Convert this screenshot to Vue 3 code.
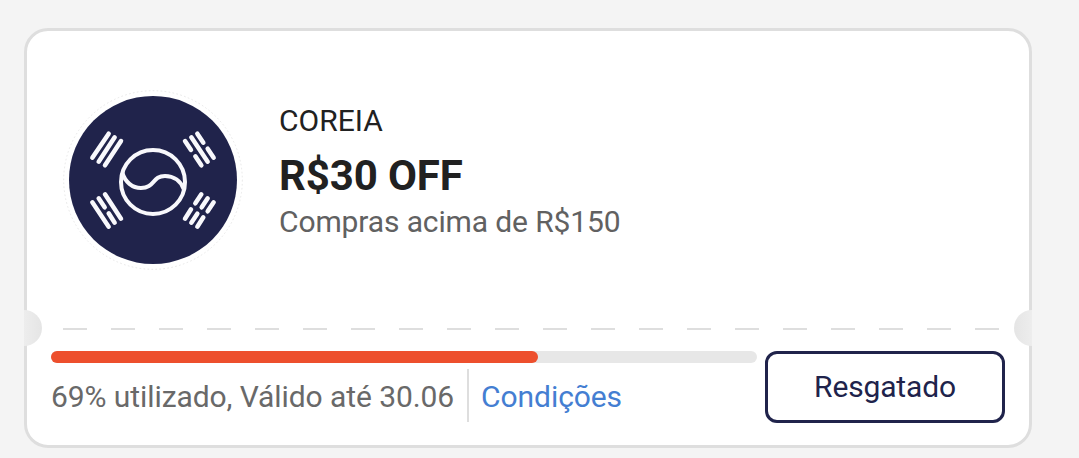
<script setup>
import { ref } from "vue";

const coupon = ref({
  store: "COREIA",
  discount: "R$30 OFF",
  minimum: "Compras acima de R$150",
  used: 69,
  validUntil: "30.06",
});
</script>

<template>
  <main class="coupon">
    <section class="coupon-top">
      <svg class="logo" viewBox="39 30 540 540">
        <circle class="logo-ring" cx="309" cy="300" r="268" />
        <circle class="logo-bg" cx="309" cy="300" r="252" />
        <g class="logo-lines">
          <circle cx="309" cy="306" r="96" />
          <path
            d="M217 278C225 306 247 324 273 324C315 324 306 288 345 288C371 288 392 303 401 327"
          />
        </g>
        <g class="logo-bars">
          <path d="M176 161L127 233M194 172L146 245M213 183L165 256" />
          <path
            d="M442 161L460 188M473 206L491 233M424 172L473 245M405 183L423 210M436 229L454 256"
          />
          <path
            d="M127 367L176 440M146 355L164 382M176 400L194 428M165 343L213 416"
          />
          <path
            d="M454 343L436 370M423 388L405 416M473 355L455 382M442 401L424 428M491 367L473 394M460 412L442 440"
          />
        </g>
      </svg>
      <div class="info">
        <p class="store">{{ coupon.store }}</p>
        <h1 class="discount">{{ coupon.discount }}</h1>
        <p class="minimum">{{ coupon.minimum }}</p>
      </div>
    </section>

    <div class="divider">
      <span class="notch"></span>
      <span class="dashes"></span>
      <span class="notch notch-right"></span>
    </div>

    <section class="coupon-bottom">
      <div class="usage">
        <div class="progress">
          <div class="progress-fill" :style="{ width: coupon.used + '%' }"></div>
        </div>
        <div class="details">
          <span class="validity"
            >{{ coupon.used }}% utilizado, Válido até
            {{ coupon.validUntil }}</span
          >
          <a class="conditions">Condições</a>
        </div>
      </div>
      <button class="btn">Resgatado</button>
    </section>
  </main>
</template>

<style>
body {
  background-color: #f4f4f4;
}

#app {
  display: flow-root;
}
</style>

<style scoped>
.coupon {
  box-sizing: border-box;
  width: 1008px;
  height: 420px;
  margin: 28px 0 0 24px;
  border: 3px solid #dedede;
  border-radius: 24px;
  background-color: #fff;
  font-family: Roboto, sans-serif;
  font-size: 30px;
}

.coupon-top {
  display: flex;
  align-items: flex-start;
  box-sizing: border-box;
  height: 279px;
  padding: 59px 36px 0;
}

.logo {
  width: 180px;
  height: 180px;
}

.logo-ring {
  fill: #fff;
  stroke: #dcdcdc;
  stroke-width: 2;
  stroke-dasharray: 5 7;
}

.logo-bg {
  fill: #20234b;
}

.logo-lines,
.logo-bars {
  fill: none;
  stroke: #f8f8fc;
  stroke-width: 12;
}

.logo-bars {
  stroke-width: 13.5;
  stroke-linecap: round;
}

.info {
  margin: 13px 0 0 36px;
}

.store,
.discount,
.minimum {
  margin: 0;
  white-space: nowrap;
}

.store {
  line-height: 36px;
  color: #212121;
}

.discount {
  margin-top: 11px;
  font-size: 42px;
  font-weight: 700;
  line-height: 52px;
  letter-spacing: -0.12px;
  color: #212121;
}

.minimum {
  margin-top: 2px;
  line-height: 36px;
  letter-spacing: -0.12px;
  color: #616161;
}

.divider {
  display: flex;
  align-items: center;
  justify-content: space-between;
  height: 36px;
  margin: 0 -3px;
}

.notch {
  width: 18px;
  height: 36px;
  border-radius: 0 18px 18px 0;
  background: linear-gradient(to right, #ededed, #e5e5e5);
}

.notch-right {
  border-radius: 18px 0 0 18px;
  background: linear-gradient(to left, #ededed, #e5e5e5);
}

.dashes {
  width: 936px;
  height: 2px;
  margin-left: 6px;
  margin-top: 1px;
  background: repeating-linear-gradient(
    to right,
    #dedede 0 24px,
    transparent 24px 48px
  );
}

.coupon-bottom {
  display: flex;
  gap: 8px;
  padding: 5px 24px 0;
}

.usage {
  flex: 1;
}

.progress {
  height: 12px;
  border-radius: 6px;
  background-color: #e7e7e7;
}

.progress-fill {
  height: 100%;
  border-radius: 6px;
  background-color: #ed4f2d;
}

.details {
  display: flex;
  align-items: center;
  margin-top: 6px;
  line-height: 51px;
  letter-spacing: -0.08px;
  white-space: nowrap;
}

.validity {
  padding-top: 2px;
  padding-right: 13px;
  border-right: 2px solid #dedede;
  color: #696969;
}

.conditions {
  padding-top: 2px;
  margin-left: 12px;
  color: #447ed2;
}

.btn {
  box-sizing: border-box;
  width: 240px;
  height: 72px;
  padding: 0 0 2px;
  border: 3px solid #20234b;
  border-radius: 12px;
  background-color: #fff;
  font-family: inherit;
  font-size: 30px;
  letter-spacing: -0.15px;
  color: #20234b;
}
</style>
